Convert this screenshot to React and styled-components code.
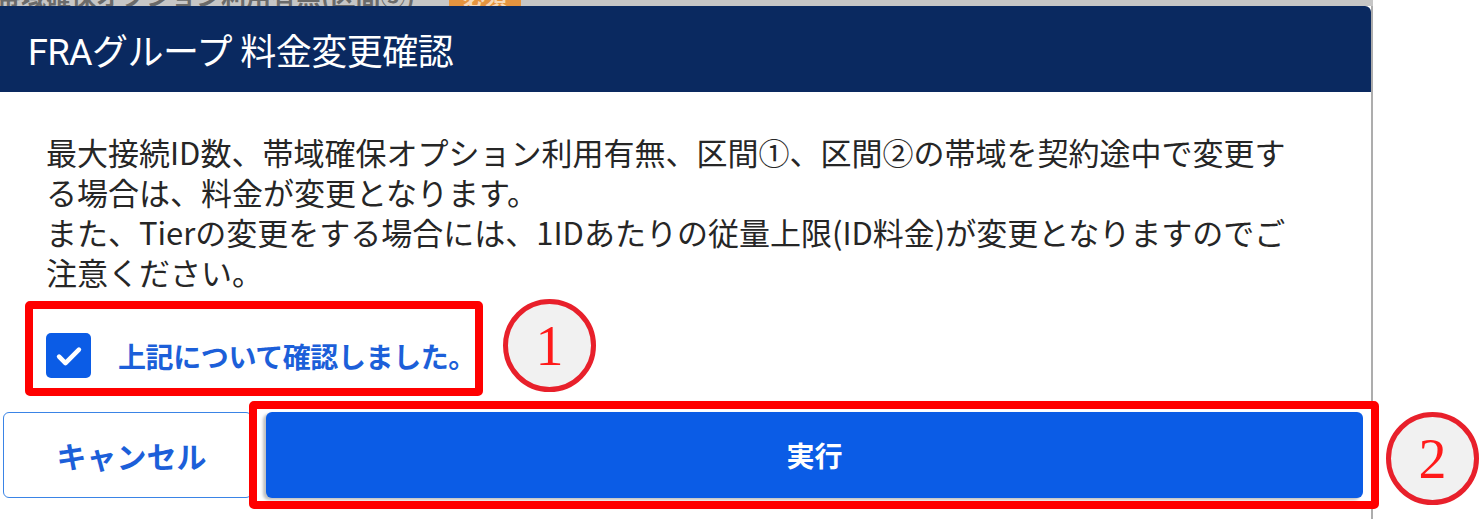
import styled, { createGlobalStyle } from 'styled-components';

const GlobalStyle = createGlobalStyle`
  html, body {
    margin: 0;
    padding: 0;
    background: #fff;
  }
  body {
    font-family: "Noto Sans CJK JP", "Noto Sans", sans-serif;
  }
`

const Canvas = styled.div`
  position: relative;
  width: 1479px;
  height: 519px;
  overflow: hidden;
  background: #fff;
`

const Shot = styled.div`
  width: 1373px;
  display: flex;
  flex-direction: column;
`

// dimmed page behind the dialog, only its last pixels show
const Backdrop = styled.div`
  height: 6px;
  background: #c6c6c6;
  display: flex;
  align-items: flex-end;
  gap: 34px;
  overflow: hidden;
`

const BackLabel = styled.span`
  font-size: 25px;
  line-height: 30px;
  font-weight: 700;
  color: #6a6a6a;
  white-space: nowrap;
  margin: 0 0 -4px -4px;
`

const BackBadge = styled.span`
  background: #e5943f;
  color: #f6d9b8;
  font-size: 22px;
  line-height: 30px;
  padding: 0 14px;
  font-weight: 700;
  margin-bottom: -4px;
`

const Modal = styled.section`
  display: flex;
  flex-direction: column;
  border-right: 2px solid #adadad;
  background: #fff;
  height: 513px;
`

const Header = styled.header`
  height: 86px;
  background: #0a2960;
  border-top-right-radius: 6px;
  display: flex;
  align-items: center;
  padding-left: 28px;
`

const Title = styled.h2`
  margin: 0;
  color: #fff;
  font-size: 36px;
  font-weight: 400;
  letter-spacing: -0.5px;
  font-family: Roboto, "Noto Sans CJK JP", sans-serif;
`

const Body = styled.div`
  padding: 40px 0 0 46px;
  display: flex;
  flex-direction: column;
`

const Message = styled.p`
  margin: 0;
  width: 1262px;
  font-size: 31px;
  line-height: 40px;
  color: #262626;
  line-break: strict;
`

const CheckRow = styled.label`
  margin-top: 41px;
  display: flex;
  align-items: center;
  gap: 27px;
  height: 45px;
`

const CheckBox = styled.span`
  width: 45px;
  height: 45px;
  border-radius: 5px;
  background: ${p => (p.$checked ? '#0b5ce6' : '#fff')};
  display: flex;
  align-items: center;
  justify-content: center;
`

const CheckLabel = styled.span`
  font-size: 28px;
  font-weight: 700;
  color: #1c5fd9;
  letter-spacing: -0.4px;
`

const Footer = styled.div`
  margin-top: 34px;
  display: flex;
  gap: 14px;
  padding: 0 8px 0 3px;
`

const Button = styled.button`
  height: 86px;
  border-radius: 6px;
  font-family: "Noto Sans CJK JP", sans-serif;
  font-weight: 700;
  cursor: pointer;
  ${p => p.$primary ? `
    flex: 1;
    background: #0b5ce6;
    color: #fff;
    border: none;
    font-size: 28px;
    box-shadow: -3px 2px 3px rgba(0, 0, 0, 0.25);
  ` : `
    width: 249px;
    padding: 0 0 0 8px;
    background: #fff;
    color: #1c5fd9;
    border: 1.5px solid #3a84e6;
    font-size: 30px;
  `}
`

// red annotation frames and numbered circles drawn over the screenshot
const Mark = styled.div`
  position: absolute;
  left: ${p => p.$x}px;
  top: ${p => p.$y}px;
  width: ${p => p.$w}px;
  height: ${p => p.$h}px;
  box-sizing: border-box;
  border: 8px solid #ff0000;
  border-radius: 5px;
  pointer-events: none;
`

const Badge = styled.div`
  position: absolute;
  left: ${p => p.$x}px;
  top: ${p => p.$y}px;
  width: 93px;
  height: 93px;
  box-sizing: border-box;
  border-radius: 50%;
  border: 5px solid #e8202b;
  background: #f1f1f1;
  display: flex;
  align-items: center;
  justify-content: center;
  font-family: "Liberation Serif", serif;
  font-size: 56px;
  color: #ff1a1a;
  line-height: 1;
`

const App = () => {
  return (
    <>
      <GlobalStyle />
      <Canvas>
        <Shot>
          <Backdrop>
            <BackLabel>帯域確保オプション利用有無(区間③)</BackLabel>
            <BackBadge>必須</BackBadge>
          </Backdrop>
          <Modal>
            <Header>
              <Title>FRAグループ 料金変更確認</Title>
            </Header>
            <Body>
              <Message>
                最大接続ID数、帯域確保オプション利用有無、区間①、区間②の帯域を契約途中で変更する場合は、料金が変更となります。
                <br />
                また、Tierの変更をする場合には、1IDあたりの従量上限(ID料金)が変更となりますのでご注意ください。
              </Message>
              <CheckRow>
                <CheckBox $checked>
                  <svg width="34" height="34" viewBox="0 0 24 24" fill="none" stroke="#fff" strokeWidth="3.2" strokeLinecap="round" strokeLinejoin="round">
                    <path d="M5 12.5l4.5 4.5 9.5-9.5" />
                  </svg>
                </CheckBox>
                <CheckLabel>上記について確認しました。</CheckLabel>
              </CheckRow>
            </Body>
            <Footer>
              <Button>キャンセル</Button>
              <Button $primary>実行</Button>
            </Footer>
          </Modal>
        </Shot>
        <Mark $x={25} $y={301} $w={458} $h={95} />
        <Badge $x={503} $y={299}>1</Badge>
        <Mark $x={249} $y={401} $w={1130} $h={108} />
        <Badge $x={1386} $y={412}>2</Badge>
      </Canvas>
    </>
  );
}

export default App;
